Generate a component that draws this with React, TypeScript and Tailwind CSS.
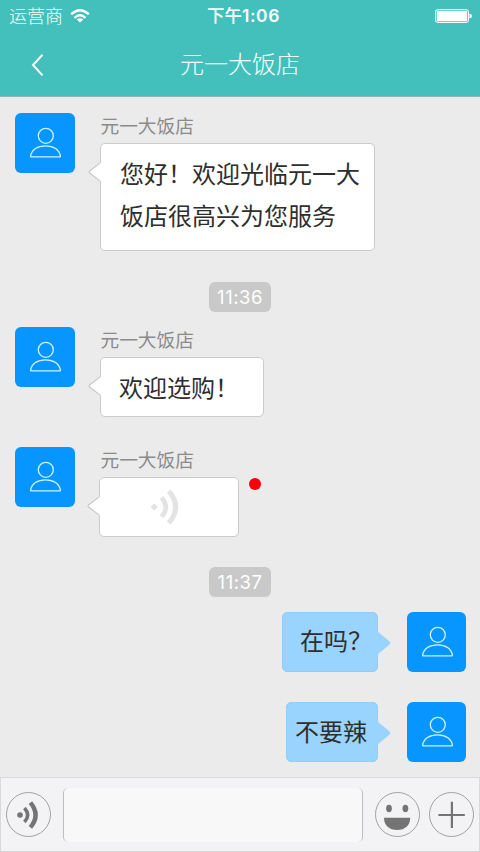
import type { ReactNode } from 'react';
import clsx from 'clsx';

const SHOP_NAME = '元一大饭店';

function Avatar({ className = 'w-[60px]' }: { className?: string }) {
  return (
    <div className={clsx('flex h-[60px] flex-shrink-0 justify-center overflow-hidden rounded-md bg-[#0795ff]', className)}>
      <svg viewBox="0 0 60 60" className="h-[60px] w-[60px] flex-shrink-0" fill="none" stroke="#c9f4ff" strokeWidth="1.3">
        <circle cx="30.8" cy="22.8" r="7.5" />
        <path d="M15.6 43.2C16.6 36.6 22.6 32.8 30.5 32.8S44.4 36.6 45.4 43.2C45.5 43.8 45.2 43.9 44.6 43.9H16.4C15.8 43.9 15.5 43.8 15.6 43.2Z" />
      </svg>
    </div>
  );
}

function VoiceWaves({ className }: { className?: string }) {
  return (
    <svg viewBox="0 0 30 36" className={className} fill="none" stroke="currentColor">
      <path d="M4.2 14.2L7.8 18L4.2 21.8L0.6 18Z" fill="currentColor" stroke="none" />
      <path d="M11.6 8.4Q20 18 11.6 27.8" strokeWidth="4.6" />
      <path d="M18.8 2.2Q32.6 18 18.8 34" strokeWidth="5" />
    </svg>
  );
}

interface BubbleProps {
  side?: 'left' | 'right';
  className?: string;
  children: ReactNode;
}

function Bubble({ side = 'left', className, children }: BubbleProps) {
  const left = side === 'left';

  return (
    <div
      className={clsx(
        'relative rounded-[5px] border text-2xl leading-[42px] text-[#2e2e2e]',
        left ? 'border-[#cbcbcb] bg-white' : 'border-[#8fccf7] bg-[#99d3ff]',
        className,
      )}
    >
      {left ? (
        <svg viewBox="0 0 14 24" className="absolute -left-[13px] top-4 h-6 w-3.5">
          <path d="M14 1.5L1.6 11Q.4 12 1.6 13L14 22.5Z" fill="#fff" />
          <path d="M12.5 2.6L1.6 11Q.4 12 1.6 13L12.5 21.4" fill="none" stroke="#c6c6c6" strokeWidth="1.1" />
        </svg>
      ) : (
        <svg viewBox="0 0 14 24" className="absolute -right-3.5 top-[18px] h-6 w-3.5">
          <path d="M0 0L12.6 10.4Q14.4 12 12.6 13.4L0 24Z" fill="#99d3ff" />
        </svg>
      )}
      {children}
    </div>
  );
}

function Incoming({ className, children }: { className?: string; children: ReactNode }) {
  return (
    <div className={clsx('flex items-start pl-[15px]', className)}>
      <Avatar />
      <div className="ml-6">
        <div className="h-[30px] pl-[1.5px] text-[18.7px] leading-6 text-[#8b8b8b]">{SHOP_NAME}</div>
        {children}
      </div>
    </div>
  );
}

function Outgoing({ className, children }: { className?: string; children: ReactNode }) {
  return (
    <div className={clsx('flex items-start justify-end pr-3.5', className)}>
      {children}
      <Avatar className="w-[59px]" />
    </div>
  );
}

function TimeStamp({ time, className }: { time: string; className?: string }) {
  return (
    <div className={clsx('flex justify-center', className)}>
      <span className="h-[30px] w-[62px] rounded-md bg-[#c9c9c9] text-center font-[Inter,sans-serif] text-[18.5px] leading-[31px] tracking-[0.5px] text-white">
        {time}
      </span>
    </div>
  );
}

function StatusBar() {
  return (
    <div className="flex h-[31px] items-center justify-between pl-[9px] pr-2 text-white">
      <div className="flex w-[120px] items-center text-[18px] font-light">
        <span>运营商</span>
        <svg viewBox="0 0 20 14" className="ml-[7px] h-3.5 w-5" fill="none" stroke="#fff" strokeWidth="2.3">
          <path d="M1.2 5.2Q10 -2.8 18.8 5.2" />
          <path d="M4.5 8.8Q10 3.8 15.5 8.8" />
          <path d="M10 13.6L6.8 10.5Q10 8 13.2 10.5Z" fill="#fff" stroke="none" />
        </svg>
      </div>
      <div className="pl-1.5 text-[17.5px] font-medium">
        下午<span className="font-[Inter,sans-serif] font-semibold tracking-[0.6px]">1:06</span>
      </div>
      <div className="flex w-[120px] justify-end">
        <svg viewBox="0 0 38 16" className="h-4 w-[38px]">
          <rect x="1.5" y="1.5" width="33" height="13" rx="2.5" fill="none" stroke="#fff" strokeWidth="1" />
          <rect x="2.8" y="2.8" width="30.4" height="10.4" rx="1" fill="#fff" />
          <path d="M35.5 5.5Q38 6 38 8T35.5 10.5Z" fill="#fff" />
        </svg>
      </div>
    </div>
  );
}

function Header() {
  return (
    <header className="h-[97px] flex-shrink-0 border-b border-[#8fb5b3] bg-[#43c0bc]">
      <StatusBar />
      <div className="grid h-[65px] grid-cols-[60px_1fr_60px] items-center text-white">
        <button className="pl-[30px] pt-[3px]" aria-label="返回">
          <svg viewBox="0 0 16 24" className="h-6 w-4" fill="none" stroke="#fff" strokeWidth="2">
            <path d="M12.5 1.8L3 12L12.5 22.4" />
          </svg>
        </button>
        <h1 className="pb-0.5 text-center text-2xl font-light">{SHOP_NAME}</h1>
      </div>
    </header>
  );
}

function RoundButton({ label, children }: { label: string; children: ReactNode }) {
  return (
    <button
      className="flex h-[45px] w-[45px] flex-shrink-0 items-center justify-center rounded-full border border-[#a2a2a2] text-[#747474]"
      aria-label={label}
    >
      {children}
    </button>
  );
}

function InputBar() {
  return (
    <footer className="flex h-[75px] flex-shrink-0 items-center border border-[#d9d9db] bg-[#f3f3f5] pl-[5px] pr-[5px]">
      <RoundButton label="语音">
        <svg viewBox="0 0 43 43" className="h-[43px] w-[43px]" fill="none" stroke="currentColor">
          <circle cx="13" cy="22" r="2.8" fill="currentColor" stroke="none" />
          <path d="M17.4 15Q24 22 17.4 29" strokeWidth="3.5" />
          <path d="M23.4 9.6Q33.8 22 23.4 34.4" strokeWidth="4.4" />
        </svg>
      </RoundButton>
      <div className="ml-3 h-[54px] flex-1 rounded-[5px] border-x border-[#bebebe] bg-[#f8f8f8]" />
      <div className="ml-3 flex gap-[9px]">
        <RoundButton label="表情">
          <svg viewBox="0 0 43 43" className="h-[43px] w-[43px]" fill="currentColor">
            <ellipse cx="13" cy="15.5" rx="2.9" ry="3.7" />
            <ellipse cx="29.4" cy="15.5" rx="2.9" ry="3.7" />
            <path d="M8 24.8H34.2C34.2 32.5 29 37 21.1 37S8 32.5 8 24.8Z" />
          </svg>
        </RoundButton>
        <RoundButton label="更多">
          <svg viewBox="0 0 43 43" className="h-[43px] w-[43px]" stroke="currentColor" strokeWidth="2.2">
            <path d="M8.4 22H34.8M21.9 8.8V35" />
          </svg>
        </RoundButton>
      </div>
    </footer>
  );
}

export default function App() {
  return (
    <div className="flex h-[852px] w-[480px] flex-col overflow-hidden bg-[#ebebeb] font-['Noto_Sans_CJK_SC',sans-serif]">
      <Header />
      <main className="flex-1 pt-4">
        <Incoming>
          <Bubble className="ml-px h-[108px] w-[275px] pl-[19px] pt-2">
            您好！欢迎光临元一大
            <br />
            饭店很高兴为您服务
          </Bubble>
        </Incoming>

        <TimeStamp time="11:36" className="mt-[31px]" />

        <Incoming className="mt-[15px]">
          <Bubble className="ml-px h-[60px] w-[164px] pl-[18px] pt-2">欢迎选购！</Bubble>
        </Incoming>

        <Incoming className="mt-[30px]">
          <div className="flex items-start">
            <Bubble className="h-[60px] w-[140px]">
              <VoiceWaves className="ml-[50px] mt-[11px] h-9 w-[30px] text-[#e3e3e3]" />
            </Bubble>
            <span className="ml-2.5 mt-px h-3 w-3 rounded-full bg-[#fb0007]" />
          </div>
        </Incoming>

        <TimeStamp time="11:37" className="mt-[30px]" />

        <Outgoing className="mt-[15px]">
          <Bubble side="right" className="mr-[29px] h-[60px] w-24 pl-[17px] pt-1.5">
            在吗？
          </Bubble>
        </Outgoing>
        <Outgoing className="mt-[30px]">
          <Bubble side="right" className="mr-[29px] h-[60px] w-[92px] pl-2 pt-[7px]">
            不要辣
          </Bubble>
        </Outgoing>
      </main>
      <InputBar />
    </div>
  );
}
